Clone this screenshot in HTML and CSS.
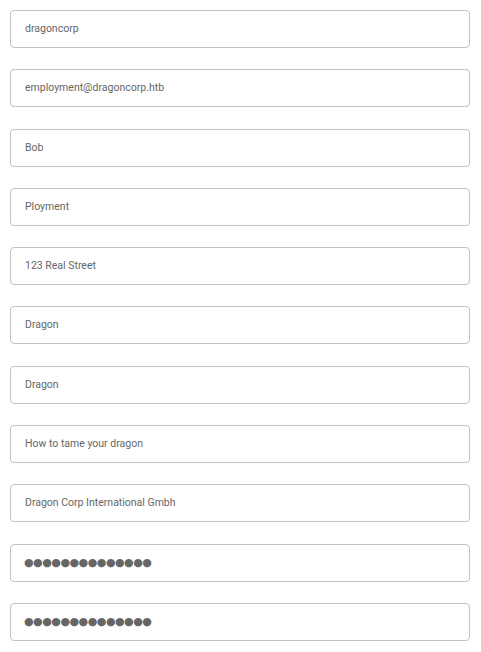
FILE: index.html
```html
<!DOCTYPE html>
<html>
<head>
<meta charset="utf-8">
<link rel="stylesheet" href="styles.css">
</head>
<body>
<form class="form">
  <input class="field" type="text" value="dragoncorp">
  <input class="field" type="text" value="employment@dragoncorp.htb">
  <input class="field" type="text" value="Bob">
  <input class="field" type="text" value="Ployment">
  <input class="field" type="text" value="123 Real Street">
  <input class="field" type="text" value="Dragon">
  <input class="field" type="text" value="Dragon">
  <input class="field" type="text" value="How to tame your dragon">
  <input class="field" type="text" value="Dragon Corp International Gmbh">
  <input class="field pw" type="text" value="●●●●●●●●●●●●●●">
  <input class="field pw" type="text" value="●●●●●●●●●●●●●●">
</form>
</body>
</html>
```
FILE: styles.css
```css
html, body {
  margin: 0;
  padding: 0;
  background: #fff;
}
.form {
  display: flex;
  flex-direction: column;
  gap: 21.3px;
  padding: 10px 11px 0 10px;
}
.field {
  box-sizing: border-box;
  width: 460px;
  height: 38px;
  margin: 0;
  padding: 0 14px 1px;
  border: 1px solid #c2c2c2;
  border-radius: 4px;
  font-family: Roboto, "Liberation Sans", sans-serif;
  font-size: 10.5px;
  color: #666;
  background: #fff;
  outline: none;
}
.pw {
  font-family: "DejaVu Sans", sans-serif;
  font-size: 11px;
  letter-spacing: -0.5px;
  padding-left: 13px;
}
```
